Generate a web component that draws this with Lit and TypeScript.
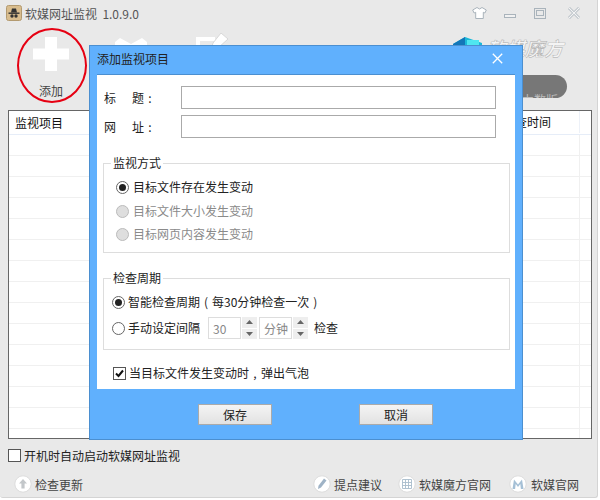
import { LitElement, html, css, svg } from "lit";
import { customElement } from "lit/decorators.js";

const FONT = css`"Noto Sans CJK SC", "Liberation Sans", sans-serif`;

@customElement("app-root")
export class AppRoot extends LitElement {
  static styles = css`
    :host { display: block; width: 600px; height: 500px; background: #fff; overflow: hidden; font-family: ${FONT}; font-size: 12px; color: #222; }
    * { box-sizing: border-box; }
    .p { display: inline-block; width: 12px; text-align: center; }
    .win { position: relative; width: 598px; height: 498px; background: #e9e9e9; border-right: 1px solid #d4d4d4; border-bottom: 1px solid #d4d4d4; border-radius: 0 0 3px 3px; display: flex; flex-direction: column; }
    .titlebar { height: 25px; display: flex; align-items: center; padding: 1px 17px 0 6px; gap: 3px; color: #555; font-size: 12px; flex: none; }
    .spacer { flex: 1; }
    .winbtns { display: flex; align-items: center; }
    .winbtns svg { display: block; }
    .b-min { margin-left: 17px; }
    .b-max { margin-left: 18px; }
    .b-close { margin-left: 22px; }
    .toolbar { height: 85px; display: flex; flex: none; position: relative; }
    .add { margin: 12px 0 0 25px; width: 52px; display: flex; flex-direction: column; align-items: center; color: #444; gap: 12px; line-height: 16px; }
    .ring { position: absolute; left: 17px; top: 3px; width: 70px; height: 75px; border: 2px solid #e60012; border-radius: 50%; }
    .ico2 { position: absolute; left: 115px; top: 12px; }
    .ico3 { position: absolute; left: 196px; top: 8px; }
    .magic { position: absolute; left: 453px; top: 11px; display: flex; align-items: center; gap: 5px; font-size: 19px; line-height: 24px; font-style: italic; font-weight: 700; color: #f4f4f4; -webkit-text-stroke: 0.4px #a8a8a8; }
    .pill { position: absolute; left: 480px; top: 50px; width: 87px; height: 23px; border-radius: 12px; background: #777; overflow: hidden; color: #bdbdbd; font-size: 12px; line-height: 16px; padding: 17px 0 0 42px; white-space: nowrap; }
    .tbl { flex: none; margin-left: 8px; width: 584px; height: 329px; background: #fff; border: 1px solid #666; display: grid; grid-template-rows: 24px repeat(15, 21px); overflow: hidden; }
    .row { border-bottom: 1px solid #edf1f8; display: grid; grid-template-columns: 1fr 12px; }
    .head { border-bottom-color: #e6edf8; color: #111; align-items: center; padding: 0 0 1px 6px; }
    .head span:last-child { border-left: 1px solid #edf1f8; height: 100%; }
    .row.plain { border-bottom: 1px solid #f0f0f0; }
    .plain i { border-left: 1px solid #f0f0f0; grid-column: 2; }
    .time { position: absolute; left: 515px; top: 113px; color: #111; line-height: 18px; }
    .autorun { display: flex; align-items: center; gap: 3px; margin: 8px 0 0 8px; color: #222; height: 17px; }
    .box { width: 13px; height: 13px; border: 1px solid #555; background: #fff; flex: none; }
    .footer { display: flex; align-items: center; margin-top: 11px; height: 18px; padding: 0 18px 0 14px; color: #444; }
    .link { display: flex; align-items: center; gap: 3px; }
    .link.first { margin-right: auto; }
    .link.l3 { margin-left: 16px; }
    .link.l4 { margin-left: 18px; gap: 4px; }
    .dialog { position: absolute; left: 89px; top: 45px; width: 434px; height: 395px; background: #60b0fd; border: 1px solid #4b8fd0; display: flex; flex-direction: column; }
    .dtitle { height: 28px; flex: none; display: flex; align-items: center; justify-content: space-between; padding: 0 19px 3px 7px; color: #222; }
    .dbody { height: 315px; margin: 0 7px; flex: none; background: #fff; border-top: 1px solid #4b8fd0; padding: 11px 6px 0 6px; color: #222; }
    .field { display: flex; align-items: center; height: 23px; margin-bottom: 6px; }
    .field label { width: 78px; padding-left: 1px; display: flex; }
    .field label b { font-weight: 400; width: 28px; }
    .input { width: 315px; height: 23px; background: #fff; border: 1px solid #aaa; }
    .group { position: relative; border: 1px solid #ddd; width: 407px; }
    .group .legend { position: absolute; left: 7px; top: -9px; padding: 0 2px; background: #fff; line-height: 16px; color: #222; }
    .g1 { height: 90px; margin-top: 25px; padding: 12px 0 0 12px; }
    .g2 { height: 72px; margin-top: 25px; padding: 10px 0 0 8px; }
    .radio-row { display: flex; align-items: center; gap: 4px; height: 23.5px; }
    .radio-row > .t { padding-bottom: 2px; }
    .radio { width: 13px; height: 13px; border-radius: 50%; border: 1px solid #666; background: #fff; display: flex; align-items: center; justify-content: center; flex: none; }
    .radio.on::after { content: ""; width: 7px; height: 7px; border-radius: 50%; background: #222; }
    .disabled { color: #8a8a8a; }
    .disabled .radio { background: #dedede; border-color: #bbb; }
    .g2 .radio-row { height: 26px; gap: 3px; }
    .sp1 { margin-left: 5px; }
    .sp2 { margin-left: -1px; }
    .sp3 { margin-left: 3px; }
    .spin { display: flex; align-items: center; }
    .spinval { width: 33px; height: 22px; border: 1px solid #ddd; color: #888; display: flex; align-items: center; padding-left: 4px; background: #fff; }
    .arrows { display: flex; flex-direction: column; gap: 1px; margin-left: 1px; }
    .arrows span { width: 15px; height: 10.500px; background: #eee; display: flex; align-items: center; justify-content: center; }
    .check { display: flex; align-items: center; gap: 3px; margin: 14px 0 0 10px; height: 18px; }
    .check svg { display: block; flex: none; }
    .check .t { padding-bottom: 2px; }
    .dfoot { flex: 1; display: flex; justify-content: flex-start; padding: 15px 0 0 108px; gap: 87px; }
    .btn { width: 74px; height: 21px; border: 1px solid #aaa; background: linear-gradient(#f4f4f4, #e2e2e2); display: flex; align-items: center; justify-content: center; color: #222; }
  `;

  private circ(inner: unknown) {
    return html`<svg width="18" height="18" viewBox="0 0 18 18"><circle cx="9" cy="9" r="8.200" fill="#fff" stroke="#dcdcdc"/>${inner}</svg>`;
  }

  render() {
    return html`<div class="win">
      <div class="titlebar">
        <svg width="16" height="16" viewBox="0 0 16 16"><rect x=".5" y=".5" width="15" height="15" rx="2" fill="#d9bd8e" stroke="#b39a70"/><path d="M2.500 7.500h11v1.400h-11z" fill="#333"/><path d="M5 7.500 6 3.500h4l1 4z" fill="#333"/><circle cx="6" cy="11" r="1.700" fill="#333"/><circle cx="10" cy="11" r="1.700" fill="#333"/></svg>
        <span>软媒网址监视&nbsp;&nbsp;1.0.9.0</span>
        <span class="spacer"></span>
        <div class="winbtns">
          <svg width="15" height="12" viewBox="0 0 15 12"><path d="M5 .5 .7 3l1.400 3 1.600-.7V11.500h7.600V5.300l1.600.7 1.400-3L10 .5 7.500 2z" fill="#fff" stroke="#a9b3bb"/></svg>
          <svg class="b-min" width="12" height="12" viewBox="0 0 12 12"><rect x=".5" y="7.500" width="11" height="3" fill="#f1f1f1" stroke="#a9b3bb"/></svg>
          <svg class="b-max" width="12" height="11" viewBox="0 0 12 11"><rect x=".5" y=".5" width="11" height="10" fill="none" stroke="#a9b3bb"/><rect x="2.500" y="2.500" width="7" height="5" fill="none" stroke="#a9b3bb"/></svg>
          <svg class="b-close" width="12" height="12" viewBox="0 0 12 12"><path d="M1 1 11 11M11 1 1 11" stroke="#a9b3bb" stroke-width="2.600"/><path d="M1 1 11 11M11 1 1 11" stroke="#f4f4f4" stroke-width="1.200"/></svg>
        </div>
      </div>
      <div class="toolbar">
        <div class="add">
          <svg width="36" height="34" viewBox="0 0 36 34"><path d="M12 0h12v11.500h12v11H24V34H12V22.500H0v-11h12z" fill="#fff"/></svg>
          <span>添加</span>
        </div>
        <div class="ring"></div>
        <svg class="ico2" width="32" height="20" viewBox="0 0 32 20"><path d="M0 5 5 1l11 6L27 1l5 4V20H0z" fill="#fff"/></svg>
        <svg class="ico3" width="34" height="32" viewBox="0 0 34 32"><path d="M0 4h19v4H4v24H0z" fill="#fff"/><path d="M25 0 32 6 22 15 15 17l2-7z" fill="#fff" stroke="#d8d8d8"/></svg>
        <div class="magic">
          <svg width="29" height="24" viewBox="0 0 29 24"><path d="M0 8 12 1l17 6v17H0z" fill="#1bb9d8"/><path d="M0 8 12 1v23H0z" fill="#1376b8"/><path d="M14 4h12v14H14z" fill="#4fe6f0"/></svg>
          <span>软媒魔方</span>
        </div>
        <div class="pill">力数版</div>
      </div>
      <div class="tbl">
        <div class="row head"><span>监视项目</span><span></span></div>
        ${Array.from({ length: 15 }, () => html`<div class="row plain"><i></i></div>`)}
      </div>
      <div class="time">查时间</div>
      <div class="autorun"><span class="box"></span><span>开机时自动启动软媒网址监视</span></div>
      <div class="footer">
        <div class="link first">${this.circ(svg`<path d="M9 4 13 8.500H10.600V13.500H7.400V8.500H5z" fill="#c3c7ca"/>`)}<span>检查更新</span></div>
        <div class="link">${this.circ(svg`<path d="M11 3.500 13.500 5.500 8 12.500 5 14l.5-3.200z" fill="#9fb3c6"/>`)}<span>提点建议</span></div>
        <div class="link l3">${this.circ(svg`<path d="M4.500 4.500h9v9h-9zM4.500 7.500h9M4.500 10.500h9M7.500 4.500v9M10.500 4.500v9" fill="none" stroke="#a8bccc" stroke-width=".9"/>`)}<span>软媒魔方官网</span></div>
        <div class="link l4">${this.circ(svg`<path d="M3.500 14 5 4.500 9 9.500l4-5L14.500 14h-2.600L11.300 9 9 12 6.700 9l-.6 5z" fill="#a5c0d6"/>`)}<span>软媒官网</span></div>
      </div>

      <div class="dialog">
        <div class="dtitle"><span>添加监视项目</span>
          <svg width="11" height="11" viewBox="0 0 11 11"><path d="M.8.8l9.400 9.400M10.200.8.800 10.200" stroke="#fff" stroke-width="1.300"/></svg>
        </div>
        <div class="dbody">
          <div class="field"><label><b>标</b><span>题<span class="p">:</span></span></label><div class="input"></div></div>
          <div class="field"><label><b>网</b><span>址<span class="p">:</span></span></label><div class="input"></div></div>
          <div class="group g1">
            <span class="legend">监视方式</span>
            <div class="radio-row"><span class="radio on"></span><span class="t">目标文件存在发生变动</span></div>
            <div class="radio-row disabled"><span class="radio"></span><span class="t">目标文件大小发生变动</span></div>
            <div class="radio-row disabled"><span class="radio"></span><span class="t">目标网页内容发生变动</span></div>
          </div>
          <div class="group g2">
            <span class="legend">检查周期</span>
            <div class="radio-row"><span class="radio on"></span><span class="t">智能检查周期<span class="p">(</span>每30分钟检查一次<span class="p">)</span></span></div>
            <div class="radio-row"><span class="radio"></span><span class="t">手动设定间隔</span>
              <div class="spin sp1"><span class="spinval">30</span><div class="arrows"><span>${this.up()}</span><span>${this.down()}</span></div></div>
              <div class="spin sp2"><span class="spinval">分钟</span><div class="arrows"><span>${this.up()}</span><span>${this.down()}</span></div></div>
              <span class="sp3 t">检查</span>
            </div>
          </div>
          <div class="check">
            <svg width="13" height="13" viewBox="0 0 13 13"><rect x=".5" y=".5" width="12" height="12" fill="#fff" stroke="#555"/><path d="M3 6.500 5.500 9 10 3.500" fill="none" stroke="#111" stroke-width="2"/></svg>
            <span class="t">当目标文件发生变动时<span class="p">,</span>弹出气泡</span>
          </div>
        </div>
        <div class="dfoot"><div class="btn">保存</div><div class="btn">取消</div></div>
      </div>
    </div>`;
  }

  private up() {
    return html`<svg width="7" height="4" viewBox="0 0 7 4"><path d="M3.500 0 7 4H0z" fill="#666"/></svg>`;
  }
  private down() {
    return html`<svg width="7" height="4" viewBox="0 0 7 4"><path d="M0 0h7L3.500 4z" fill="#666"/></svg>`;
  }
}
